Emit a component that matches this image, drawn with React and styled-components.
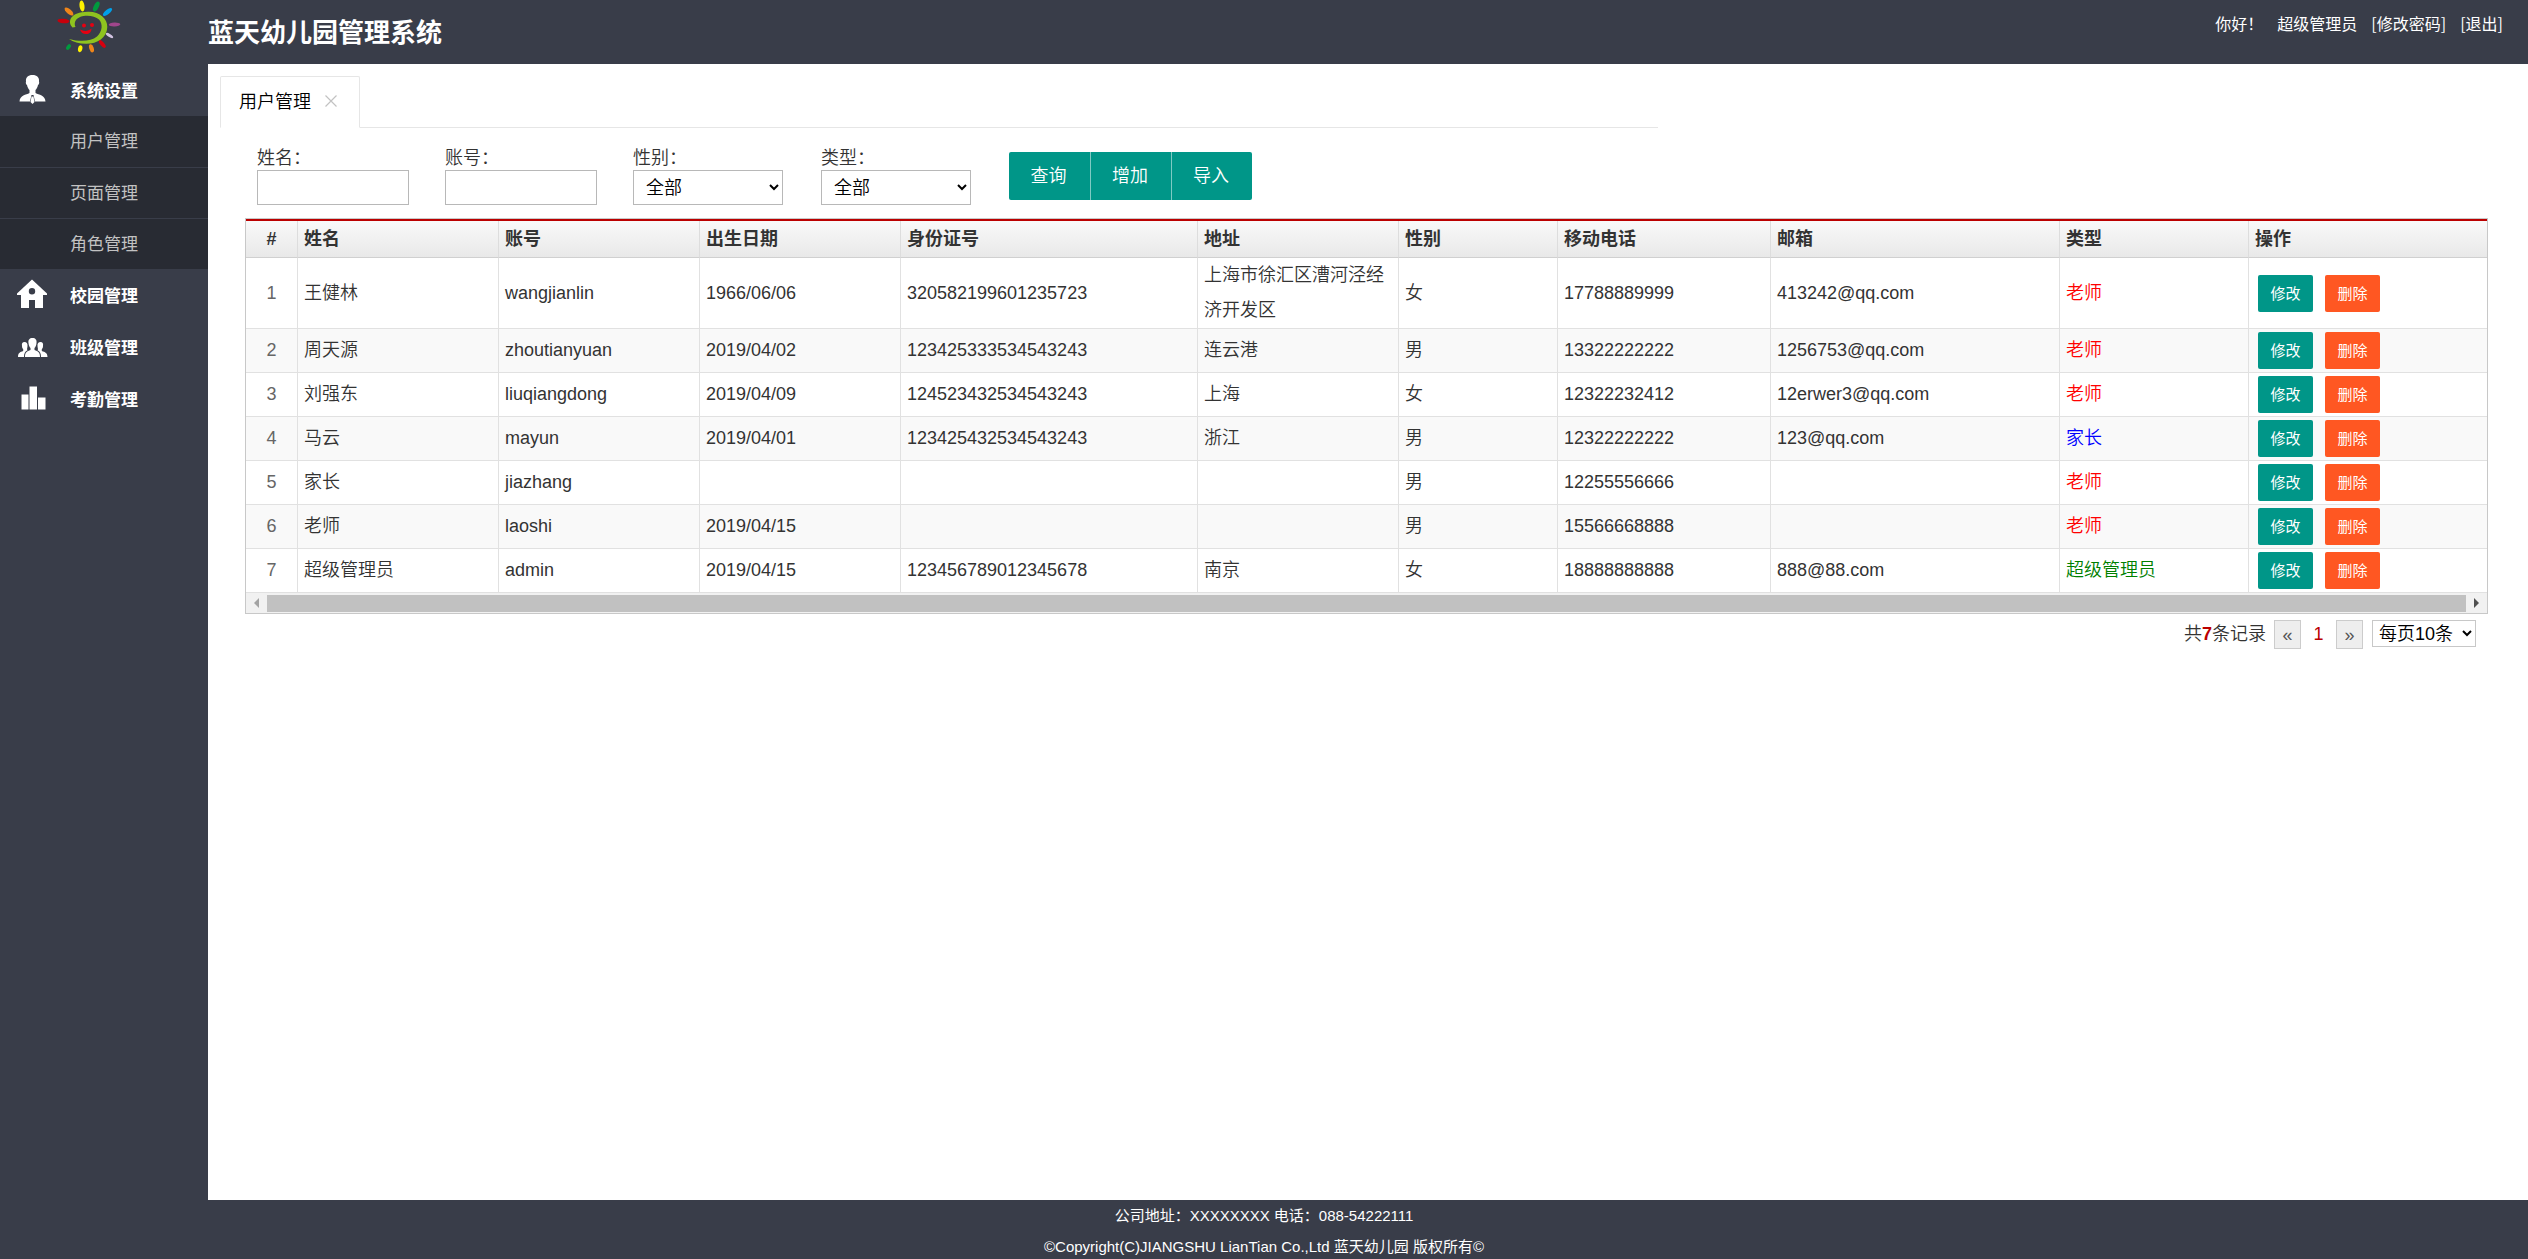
import React from "react";
import styled, { createGlobalStyle } from "styled-components";

const Global = createGlobalStyle`
  *, *::before, *::after { box-sizing: border-box; }
  body {
    margin: 0;
    color: #333;
    background: #fff;
    font-family: "Liberation Sans", "Noto Sans CJK SC", sans-serif;
    font-size: 18px;
  }
  button, input, select { font: inherit; margin: 0; }
  a { color: inherit; text-decoration: none; }
`;

const Page = styled.div`
  display: flex;
  flex-direction: column;
  min-height: 100vh;
`;

const Header = styled.header`
  display: flex;
  align-items: flex-start;
  height: 64px;
  background: #393d49;
  color: #fff;
`;

const LogoLink = styled.a`
  width: 208px;
  display: flex;
  justify-content: center;
  padding-right: 30px;
  svg { display: block; }
`;

const Title = styled.h1`
  margin: 0;
  font-size: 26px;
  line-height: 66px;
  font-weight: 700;
`;

const UserNav = styled.nav`
  margin-left: auto;
  display: flex;
  gap: 14px;
  padding-right: 25px;
  font-family: "Noto Sans CJK SC", sans-serif;
  font-size: 16px;
  line-height: 46px;
`;

const Body = styled.div`
  display: flex;
  flex: 1;
`;

const Sidebar = styled.aside`
  width: 208px;
  flex: none;
  background: #393d49;
  color: #fff;
  font-size: 17px;
`;

const MenuButton = styled.button`
  display: flex;
  align-items: center;
  width: 100%;
  height: 52px;
  padding: 0 0 2px 16px;
  gap: 22px;
  border: 0;
  background: none;
  color: #fff;
  font-weight: 700;
  cursor: pointer;
  svg { flex: none; }
`;

const SubMenu = styled.ul`
  margin: 0;
  padding: 0;
  list-style: none;
  background: #282b33;
`;

const SubItem = styled.li`
  height: 51px;
  line-height: 52px;
  & + & { border-top: 1px solid #393d49; }
  a {
    display: block;
    padding-left: 70px;
    color: #c2c2c2;
  }
`;

const Main = styled.main`
  flex: 1;
  min-width: 0;
  padding: 12px 40px 0 12px;
`;

const TabBar = styled.div`
  display: flex;
  height: 52px;
  width: 63.4%;
  border-bottom: 1px solid #e6e6e6;
`;

const Tab = styled.div`
  display: flex;
  align-items: center;
  gap: 13px;
  width: 140px;
  height: 52px;
  padding: 0 0 5px 18px;
  border: 1px solid #e6e6e6;
  border-bottom-color: #fff;
  border-radius: 2px 2px 0 0;
  color: #000;
  font-weight: 350;
`;

const TabClose = styled.button`
  display: flex;
  padding: 3px 0 0;
  border: 0;
  background: none;
  color: #c2c2c2;
`;

const Panel = styled.section`
  padding-left: 25px;
  font-weight: 350;
`;

const SearchForm = styled.form`
  display: flex;
  align-items: flex-start;
  padding: 19px 0 13px 12px;
`;

const Field = styled.div`
  display: flex;
  flex-direction: column;
  width: 152px;
  margin-right: 36px;
  label { line-height: 23px; }
  input, select {
    width: 100%;
    height: 35px;
    border: 1px solid #b8b8b8;
    border-radius: 0;
    background: #fff;
    color: #000;
  }
  input { padding: 0 8px; }
  select { width: 150px; padding: 0 8px; }
`;

const ButtonGroup = styled.div`
  display: flex;
  margin-top: 5px;
`;

const GroupButton = styled.button`
  width: 81px;
  height: 48px;
  padding: 0 2px 4px 0;
  border: 0;
  background: #009688;
  color: #fff;
  &:first-child { border-radius: 2px 0 0 2px; }
  &:last-child { border-radius: 0 2px 2px 0; }
  & + & { border-left: 1px solid #7fcac3; }
`;

const Grid = styled.div`
  border: 1px solid #c8c8c8;
`;

const Table = styled.table`
  width: 100%;
  table-layout: fixed;
  border-collapse: separate;
  border-spacing: 0;
  border-top: 2px solid #b00;
  line-height: 35px;
  th, td {
    padding: 0 6px;
    text-align: left;
    border-right: 1px solid #e1e1e1;
    border-bottom: 1px solid #e1e1e1;
  }
  th:last-child, td:last-child { border-right: 0; }
  th {
    height: 37px;
    font-weight: 700;
    border-right-color: #ddd;
    border-bottom-color: #d0d0d0;
  }
  thead tr { background: linear-gradient(#f9f9f9, #e8e8e8); }
  td { height: 44px; }
  tbody tr:nth-child(even) { background: #f9f9f9; }
  th:first-child, td:first-child { text-align: center; }
  td:first-child { color: #666; }
`;

const TypeName = styled.span`
  color: ${(p) => p.$color};
`;

const Actions = styled.div`
  display: flex;
  gap: 12px;
  padding-left: 3px;
`;

const SmallButton = styled.button`
  width: 55px;
  height: 37px;
  padding: 0;
  border: 0;
  border-radius: 2px;
  background: ${(p) => (p.$danger ? "#ff5722" : "#009688")};
  color: #fff;
  font-size: 15px;
  font-weight: 400;
`;

const ScrollTrack = styled.div`
  display: flex;
  align-items: center;
  height: 20px;
  padding: 0 7px;
  gap: 6px;
  background: #f1f1f1;
`;

const ScrollThumb = styled.div`
  flex: 1;
  height: 17px;
  background: #c1c1c1;
`;

const Pager = styled.div`
  display: flex;
  justify-content: flex-end;
  align-items: flex-start;
  padding: 6px 12px 0 0;
  line-height: 28px;
  b, strong { color: #b00; }
  b { font-weight: 700; }
  strong { width: 35px; text-align: center; font-weight: 400; }
  select {
    width: 104px;
    height: 27px;
    margin-left: 9px;
    padding: 0 2px;
    border: 1px solid #c8c8c8;
    border-radius: 0;
    background: #fff;
    color: #000;
  }
`;

const Total = styled.span`
  margin-right: 8px;
`;

const PageButton = styled.button`
  width: 27px;
  height: 29px;
  padding: 0;
  border: 1px solid #ccc;
  background: #eee;
  color: #555;
`;

const Footer = styled.footer`
  height: 59px;
  background: #393d49;
  color: #fff;
  font-size: 15px;
  line-height: 31px;
  text-align: center;
  p { margin: 0; }
`;

const rays = [
  [63.5, 21, 6, 2.2, 5, "#c7000b"],
  [69, 11.5, 5.5, 2.4, 42, "#f08519"],
  [82, 6, 5.5, 2.5, 83, "#fff100"],
  [96.3, 6.5, 5.3, 2.4, 118, "#009a3e"],
  [107.5, 12, 5.6, 2.3, 142, "#00a0e9"],
  [114.5, 24.5, 5.8, 2, 178, "#a0468b"],
  [109.5, 35.5, 4.2, 1.5, 32, "#d3c4e2"],
  [102.3, 44, 4.7, 2, 50, "#d7000f"],
  [91.5, 48.3, 4.2, 2.2, 72, "#f08519"],
  [80.2, 48.7, 3.5, 2.2, 100, "#fff100"],
  [68.5, 47, 3.2, 1.9, 125, "#009a3e"],
];

function Logo() {
  return (
    <svg width="64" height="54" viewBox="57 0 64 54" aria-label="蓝天幼儿园" role="img">
      {rays.map(([x, y, rx, ry, a, c]) => (
        <ellipse key={`${x}`} cx={x} cy={y} rx={rx} ry={ry} fill={c} transform={`rotate(${a} ${x} ${y})`} />
      ))}
      <path
        fill="#8fc31f"
        d="M72.500 27.500C67 22 70 12 88 11.800C100 11.500 107.500 19 107.300 27C107 38 97 44 86 43.800C79 43.700 73 42 69 39C80 42 91 41.500 97 36.500C102.500 31.500 103 24 99 19.500C94 14.500 80 14 76 20C74.300 22.500 74.500 25 75.500 27Z"
      />
      <circle cx="84" cy="25.500" r="2" fill="#e60012" />
      <circle cx="92" cy="25" r="2" fill="#e60012" />
      <path fill="#e60012" d="M80 29.500C84 31.500 88 31.500 91.500 28.500C91.500 33 88 34.500 86 34C83 34 81 32.500 80 29.500Z" />
    </svg>
  );
}

const iconShapes = {
  user: (
    <>
      <path d="M16.500 2C12 2 9.500 4.500 10 8.500C9.500 9.500 10 11.500 11 12C11.500 14.500 12.500 16 13.500 17V20C10 22 4 22 3.500 28.500H14L15.500 22H17.500L19 28.500H29.500C29 22 23 22 19.500 20V17C20.500 16 21.500 14.500 22 12C23 11.500 23.500 9.500 23 8.500C23.500 4.500 21 2 16.500 2Z" />
      <path d="M15.500 23.500H17.500L18.500 29L16.500 31L14.500 29Z" />
    </>
  ),
  home: (
    <path
      fillRule="evenodd"
      d="M16 1.500L1 15.500V17H5V30H13V22H19V30H27V17H31V15.500ZM16 10A3.200 3.200 0 1 1 16 16.400A3.200 3.200 0 1 1 16 10Z"
    />
  ),
  group: (
    <>
      <path d="M16.500 8C13.500 8 12 10 12.500 13C12.700 15.500 13.500 17 14.500 18V20C11 21.500 9 22 9 27H24C24 22 22 21.500 18.500 20V18C19.500 17 20.300 15.500 20.500 13C21 10 19.500 8 16.500 8Z" />
      <path d="M8.500 12C6.500 12 5.500 13.500 6 16C6 17.500 6.500 18.500 7.200 19.200V21C4 22 2 23 2 27H8C8 23.500 9 21.500 11.500 20.300C10.500 19.500 11.500 17.500 11.500 16C11.800 13.500 10.500 12 8.500 12Z" />
      <path d="M24.500 12C26.500 12 27.500 13.500 27 16C27 17.500 26.500 18.500 25.800 19.200V21C29 22 31.500 23 31.500 27H25C25 23.500 24 21.500 21.500 20.300C22.500 19.500 21.500 17.500 21.500 16C21.200 13.500 22.500 12 24.500 12Z" />
    </>
  ),
  chart: <path d="M5.500 12.500H12.500V27.500H5.500ZM13.500 4.500H21V27.500H13.500ZM22 15.500H29.500V27.500H22Z" />,
};

function Icon({ name }) {
  return (
    <svg width="32" height="32" viewBox="0 0 32 32" fill="#fff" aria-hidden="true">
      {iconShapes[name]}
    </svg>
  );
}

const columns = [
  ["#", 52],
  ["姓名", 201],
  ["账号", 201],
  ["出生日期", 201],
  ["身份证号", 297],
  ["地址", 201],
  ["性别", 159],
  ["移动电话", 213],
  ["邮箱", 289],
  ["类型", 189],
  ["操作", 238],
];
const totalWidth = columns.reduce((sum, c) => sum + c[1], 0);

const typeColors = { 老师: "#f00", 家长: "#00f", 超级管理员: "#008000" };

const users = [
  ["王健林", "wangjianlin", "1966/06/06", "320582199601235723", "上海市徐汇区漕河泾经济开发区", "女", "17788889999", "413242@qq.com", "老师"],
  ["周天源", "zhoutianyuan", "2019/04/02", "123425333534543243", "连云港", "男", "13322222222", "1256753@qq.com", "老师"],
  ["刘强东", "liuqiangdong", "2019/04/09", "124523432534543243", "上海", "女", "12322232412", "12erwer3@qq.com", "老师"],
  ["马云", "mayun", "2019/04/01", "123425432534543243", "浙江", "男", "12322222222", "123@qq.com", "家长"],
  ["家长", "jiazhang", "", "", "", "男", "12255556666", "", "老师"],
  ["老师", "laoshi", "2019/04/15", "", "", "男", "15566668888", "", "老师"],
  ["超级管理员", "admin", "2019/04/15", "123456789012345678", "南京", "女", "18888888888", "888@88.com", "超级管理员"],
];

export default function App() {
  return (
    <>
      <Global />
      <Page>
        <Header>
          <LogoLink href="#home"><Logo /></LogoLink>
          <Title>蓝天幼儿园管理系统</Title>
          <UserNav>
            <span>你好！</span>
            <span>超级管理员</span>
            <a href="#password">[修改密码]</a>
            <a href="#logout">[退出]</a>
          </UserNav>
        </Header>
        <Body>
          <Sidebar>
            <MenuButton type="button"><Icon name="user" />系统设置</MenuButton>
            <SubMenu>
              <SubItem><a href="#users">用户管理</a></SubItem>
              <SubItem><a href="#pages">页面管理</a></SubItem>
              <SubItem><a href="#roles">角色管理</a></SubItem>
            </SubMenu>
            <MenuButton type="button"><Icon name="home" />校园管理</MenuButton>
            <MenuButton type="button"><Icon name="group" />班级管理</MenuButton>
            <MenuButton type="button"><Icon name="chart" />考勤管理</MenuButton>
          </Sidebar>
          <Main>
            <TabBar>
              <Tab>
                用户管理
                <TabClose type="button" aria-label="关闭">
                  <svg width="14" height="14" viewBox="0 0 14 14" stroke="currentColor" strokeWidth="1.200">
                    <path d="M1.500 1.500L12.500 12.500M12.500 1.500L1.500 12.500" />
                  </svg>
                </TabClose>
              </Tab>
            </TabBar>
            <Panel>
              <SearchForm onSubmit={(e) => e.preventDefault()}>
                <Field><label htmlFor="name">姓名：</label><input id="name" type="text" /></Field>
                <Field><label htmlFor="account">账号：</label><input id="account" type="text" /></Field>
                <Field>
                  <label htmlFor="gender">性别：</label>
                  <select id="gender"><option>全部</option><option>男</option><option>女</option></select>
                </Field>
                <Field>
                  <label htmlFor="type">类型：</label>
                  <select id="type"><option>全部</option><option>老师</option><option>家长</option></select>
                </Field>
                <ButtonGroup>
                  <GroupButton type="submit">查询</GroupButton>
                  <GroupButton type="button">增加</GroupButton>
                  <GroupButton type="button">导入</GroupButton>
                </ButtonGroup>
              </SearchForm>
              <Grid>
                <Table>
                  <colgroup>
                    {columns.map(([name, w]) => (
                      <col key={name} style={{ width: `${(w / totalWidth) * 100}%` }} />
                    ))}
                  </colgroup>
                  <thead>
                    <tr>{columns.map(([name]) => <th key={name} scope="col">{name}</th>)}</tr>
                  </thead>
                  <tbody>
                    {users.map((user, i) => (
                      <tr key={user[1]}>
                        <td>{i + 1}</td>
                        {user.slice(0, 8).map((value, j) => <td key={j}>{value}</td>)}
                        <td><TypeName $color={typeColors[user[8]]}>{user[8]}</TypeName></td>
                        <td>
                          <Actions>
                            <SmallButton type="button">修改</SmallButton>
                            <SmallButton type="button" $danger>删除</SmallButton>
                          </Actions>
                        </td>
                      </tr>
                    ))}
                  </tbody>
                </Table>
                <ScrollTrack>
                  <svg width="8" height="10" viewBox="0 0 8 10" fill="#a3a3a3"><path d="M6 0V10L1 5Z" /></svg>
                  <ScrollThumb />
                  <svg width="8" height="10" viewBox="0 0 8 10" fill="#505050"><path d="M2 0V10L7 5Z" /></svg>
                </ScrollTrack>
              </Grid>
              <Pager>
                <Total>共<b>7</b>条记录</Total>
                <PageButton type="button" aria-label="上一页">«</PageButton>
                <strong>1</strong>
                <PageButton type="button" aria-label="下一页">»</PageButton>
                <select aria-label="每页条数"><option>每页10条</option><option>每页20条</option></select>
              </Pager>
            </Panel>
          </Main>
        </Body>
        <Footer>
          <p>公司地址：XXXXXXXX 电话：088-54222111</p>
          <p>©Copyright(C)JIANGSHU LianTian Co.,Ltd 蓝天幼儿园 版权所有©</p>
        </Footer>
      </Page>
    </>
  );
}
